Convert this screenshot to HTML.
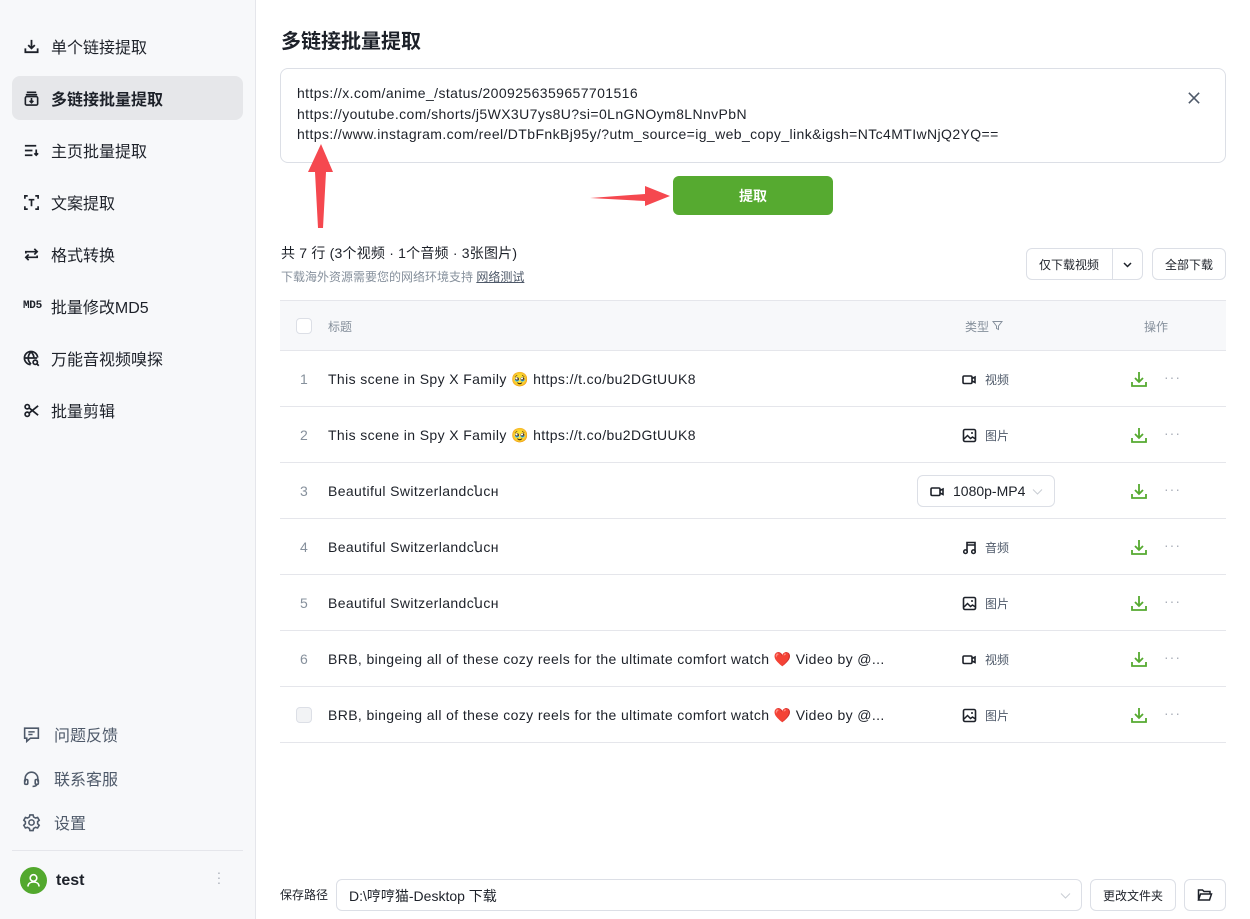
<!DOCTYPE html>
<html><head><meta charset="utf-8"><style>
*{box-sizing:border-box;margin:0;padding:0}
body{width:1250px;height:919px;position:relative;overflow:hidden;background:#fff;font-family:"Liberation Sans","Noto Sans CJK SC",sans-serif;color:#1d2129}
.abs{position:absolute}
.side{left:0;top:0;width:256px;height:919px;background:#f7f8fa;border-right:1px solid #e5e6eb}
.nav{position:absolute;left:12px;width:231px;height:44px;border-radius:8px;display:flex;align-items:center;padding-left:11px;font-size:16px;color:#1d2129}
.nav svg{width:17px;height:17px;margin-right:11px;flex:none}
.nav.act{background:#e6e7ea;font-weight:bold}
.bnav{position:absolute;left:22px;display:flex;align-items:center;font-size:16px;color:#4e5969}
.bnav svg{width:19px;height:19px;margin-right:13px}
.row{position:absolute;left:280px;width:946px;height:56px;border-bottom:1px solid #e5e6eb;font-size:14px}
.row .i{position:absolute;left:20px;top:20px;color:#86909c}
.row .t{position:absolute;left:48px;top:20px;color:#1d2129;letter-spacing:0.38px}
.row .ty{position:absolute;left:682px;top:20px;display:flex;align-items:center;font-size:12px;color:#4e5969}
.row .ty svg{width:15px;height:15px;margin-right:8px}
.row .dl{position:absolute;left:850px;top:19px}
.row .dots{position:absolute;left:884px;top:19px;color:#a9aeb8;font-size:14px;letter-spacing:1px;line-height:14px}
.btn{position:absolute;border:1px solid #dcdfe6;border-radius:6px;background:#fff;font-size:12px;display:flex;align-items:center;justify-content:center;color:#1d2129}
</style></head><body>
<div class="abs side"></div>

<div class="nav" style="top:24px"><svg viewBox="0 0 18 18" fill="none" stroke="#1d2129" stroke-width="1.9"><path d="M9 2v9M5.5 7.5L9 11l3.5-3.5M2.5 11v4h13v-4"/></svg>单个链接提取</div>
<div class="nav act" style="top:76px"><svg viewBox="0 0 18 18" fill="none" stroke="#1d2129" stroke-width="1.7"><path d="M4 2.5h10M3 5h12"/><rect x="2.5" y="7" width="13" height="9" rx="1.5"/><path d="M9 8.5v5M7 11.5l2 2 2-2"/></svg>多链接批量提取</div>
<div class="nav" style="top:128px"><svg viewBox="0 0 18 18" fill="none" stroke="#1d2129" stroke-width="1.8"><path d="M2 4h12M2 9h8M2 14h8M14 8v6M12 12l2 2 2-2"/></svg>主页批量提取</div>
<div class="nav" style="top:180px"><svg viewBox="0 0 18 18" fill="none" stroke="#1d2129" stroke-width="1.8"><path d="M2 5V2h3M13 2h3v3M16 13v3h-3M5 16H2v-3M6 6h6M9 6v7"/></svg>文案提取</div>
<div class="nav" style="top:232px"><svg viewBox="0 0 18 18" fill="none" stroke="#1d2129" stroke-width="1.8"><path d="M3 8V6h12M12 3l3 3-3 3M15 10v2H3M6 15l-3-3 3-3"/></svg>格式转换</div>
<div class="nav" style="top:284px"><span style="font-size:11px;font-weight:bold;margin-right:9px;letter-spacing:-0.3px;font-family:'Liberation Mono',monospace">MD5</span>批量修改MD5</div>
<div class="nav" style="top:336px"><svg viewBox="0 0 18 18" fill="none" stroke="#1d2129" stroke-width="1.8"><path d="M15.5 8A7 7 0 1 0 8 15.5M2 8.5h13M8.5 2c-2 2-3 4-3 6.5s1 4.5 3 6.5M8.5 2c2 2 3 4 3 6"/><circle cx="13" cy="13" r="2.3"/><path d="M14.7 14.7l2 2"/></svg>万能音视频嗅探</div>
<div class="nav" style="top:388px"><svg viewBox="0 0 18 18" fill="none" stroke="#1d2129" stroke-width="1.8"><circle cx="4.5" cy="5" r="2.3"/><circle cx="4.5" cy="13" r="2.3"/><path d="M6.5 6.3L16 14M6.5 11.7L16 4"/></svg>批量剪辑</div>

<div class="bnav" style="top:722px"><svg viewBox="0 0 18 18" fill="none" stroke="#4e5969" stroke-width="1.5"><path d="M2.5 3h13v9.5H8l-3.5 3v-3h-2z"/><path d="M6 6.5h6M6 9h4"/></svg>问题反馈</div>
<div class="bnav" style="top:766px"><svg viewBox="0 0 18 18" fill="none" stroke="#4e5969" stroke-width="1.5"><path d="M3 12V9a6 6 0 0 1 12 0v3"/><rect x="2.5" y="10" width="3" height="4.5" rx="1"/><rect x="12.5" y="10" width="3" height="4.5" rx="1"/><path d="M14 14.5c0 1.5-2 2-4 2"/></svg>联系客服</div>
<div class="bnav" style="top:810px"><svg viewBox="0 0 18 18" fill="none" stroke="#4e5969" stroke-width="1.5"><path d="M7.5 1.8h3l.5 2 1.8 1 2-.6 1.5 2.6-1.5 1.4v2l1.5 1.4-1.5 2.6-2-.6-1.8 1-.5 2h-3l-.5-2-1.8-1-2 .6-1.5-2.6 1.5-1.4v-2L1.7 6.8l1.5-2.6 2 .6 1.8-1z"/><circle cx="9" cy="9" r="2.5"/></svg>设置</div>
<div class="abs" style="left:12px;top:850px;width:231px;height:1px;background:#e5e6eb"></div>
<div class="abs" style="left:20px;top:867px;width:27px;height:27px;border-radius:50%;background:#52a82d"><svg viewBox="0 0 27 27" width="27" height="27" fill="none" stroke="#fff" stroke-width="1.6"><circle cx="13.5" cy="11" r="3.3"/><path d="M8 19.5c0-3 2.5-4.5 5.5-4.5s5.5 1.5 5.5 4.5"/></svg></div>
<div class="abs" style="left:56px;top:872px;font-size:16px;font-weight:bold">test</div>
<div class="abs" style="left:216px;top:870px;color:#a9aeb8;font-size:14px;line-height:5px;width:6px;text-align:center">·<br>·<br>·</div>

<div class="abs" style="left:281px;top:25px;font-size:20px;font-weight:bold">多链接批量提取</div>
<div class="abs" style="left:280px;top:68px;width:946px;height:95px;border:1px solid #dcdfe6;border-radius:8px"></div>
<div class="abs" style="left:297px;top:83px;font-size:14px;line-height:20.5px;color:#1d2129;letter-spacing:0.4px">https://x.com/anime_/status/2009256359657701516<br>https://youtube.com/shorts/j5WX3U7ys8U?si=0LnGNOym8LNnvPbN<br>https://www.instagram.com/reel/DTbFnkBj95y/?utm_source=ig_web_copy_link&amp;igsh=NTc4MTIwNjQ2YQ==</div>
<svg class="abs" style="left:1188px;top:92px" width="12" height="12" viewBox="0 0 14 14" stroke="#4e5969" stroke-width="1.8"><path d="M1 1l12 12M13 1L1 13"/></svg>
<div class="abs" style="left:673px;top:176px;width:160px;height:39px;border-radius:6px;background:#56aa30;color:#fff;font-weight:bold;font-size:14px;display:flex;align-items:center;justify-content:center">提取</div>
<svg class="abs" style="left:0;top:0" width="1250" height="919"><path d="M318 228L315 172L308 172L321 144L333 172L326 172L323 228Z" fill="#f5484f"/><path d="M590 198L645 194L645 186L670 196L645 206L645 201Z" fill="#f5484f"/></svg>

<div class="abs" style="left:281px;top:243px;font-size:14px;color:#1d2129;letter-spacing:0.2px">共 7 行 (3个视频 · 1个音频 · 3张图片)</div>
<div class="abs" style="left:281px;top:268px;font-size:12px;color:#86909c">下载海外资源需要您的网络环境支持 <span style="text-decoration:underline;color:#4e5969">网络测试</span></div>
<div class="btn" style="left:1026px;top:248px;width:117px;height:32px;justify-content:flex-start;padding-left:12px">仅下载视频<span style="position:absolute;left:85px;top:0;width:1px;height:30px;background:#dcdfe6"></span><svg style="position:absolute;left:95px;top:10px" width="11" height="11" viewBox="0 0 11 11" fill="none" stroke="#1d2129" stroke-width="1.5"><path d="M2 4l3.5 3.5L9 4"/></svg></div>
<div class="btn" style="left:1152px;top:248px;width:74px;height:32px">全部下载</div>

<div class="abs" style="left:280px;top:300px;width:946px;height:51px;background:#f7f8fa;border-top:1px solid #e5e6eb;border-bottom:1px solid #e5e6eb"></div>
<div class="abs" style="left:296px;top:318px;width:16px;height:16px;border:1px solid #dcdfe6;border-radius:4px;background:#fff"></div>
<div class="abs" style="left:328px;top:318px;font-size:12px;color:#86909c">标题</div>
<div class="abs" style="left:965px;top:318px;font-size:12px;color:#86909c">类型 <svg width="11" height="11" viewBox="0 0 11 11" fill="none" stroke="#86909c" stroke-width="1"><path d="M1 1.5h9L6.5 6v3.5L4.5 8.5V6z"/></svg></div>
<div class="abs" style="left:1144px;top:318px;font-size:12px;color:#86909c">操作</div>

<svg width="0" height="0" style="position:absolute"><defs>
<symbol id="vid" viewBox="0 0 15 15"><rect x="1" y="4" width="9" height="7.5" rx="1.2" fill="none" stroke="#1d2129" stroke-width="1.6"/><path d="M10 6.5l3-1.5v5.5l-3-1.5" fill="none" stroke="#1d2129" stroke-width="1.6"/></symbol>
<symbol id="img" viewBox="0 0 15 15"><rect x="1.5" y="1.5" width="12" height="12" rx="1.5" fill="none" stroke="#1d2129" stroke-width="1.6"/><path d="M2 11l3.5-3.5 3 3 2-1.5 3 2" fill="none" stroke="#1d2129" stroke-width="1.5"/><circle cx="10" cy="5" r="1" fill="#1d2129"/></symbol>
<symbol id="aud" viewBox="0 0 15 15"><path d="M5 11.5V2.5h8v9M5 5h8" fill="none" stroke="#1d2129" stroke-width="1.6"/><circle cx="3.5" cy="11.7" r="1.8" fill="none" stroke="#1d2129" stroke-width="1.5"/><circle cx="11.5" cy="11.7" r="1.8" fill="none" stroke="#1d2129" stroke-width="1.5"/></symbol>
<symbol id="dl" viewBox="0 0 18 18"><path d="M9 2v10M5 8l4 4 4-4M2 12v4h14v-4" fill="none" stroke="#56aa30" stroke-width="1.8"/></symbol>
</defs></svg>

<div class="row" style="top:351px"><span class="i">1</span><span class="t">This scene in Spy X Family 🥹 https://t.co/bu2DGtUUK8</span><span class="ty"><svg><use href="#vid"/></svg>视频</span><svg class="dl" width="18" height="18"><use href="#dl"/></svg><span class="dots">···</span></div>
<div class="row" style="top:407px"><span class="i">2</span><span class="t">This scene in Spy X Family 🥹 https://t.co/bu2DGtUUK8</span><span class="ty"><svg><use href="#img"/></svg>图片</span><svg class="dl" width="18" height="18"><use href="#dl"/></svg><span class="dots">···</span></div>
<div class="row" style="top:463px"><span class="i">3</span><span class="t">Beautiful Switzerlandсնсн</span><div style="position:absolute;left:637px;top:12px;width:138px;height:32px;border:1px solid #dcdfe6;border-radius:6px;display:flex;align-items:center;padding-left:12px;font-size:14px"><svg width="15" height="15" style="margin-right:8px"><use href="#vid"/></svg>1080p-MP4<svg width="11" height="11" viewBox="0 0 11 11" style="margin-left:7px" fill="none" stroke="#c9cdd4" stroke-width="1"><path d="M1 3.5l4.5 4.5L10 3.5"/></svg></div><svg class="dl" width="18" height="18"><use href="#dl"/></svg><span class="dots">···</span></div>
<div class="row" style="top:519px"><span class="i">4</span><span class="t">Beautiful Switzerlandсնсн</span><span class="ty"><svg><use href="#aud"/></svg>音频</span><svg class="dl" width="18" height="18"><use href="#dl"/></svg><span class="dots">···</span></div>
<div class="row" style="top:575px"><span class="i">5</span><span class="t">Beautiful Switzerlandсնсн</span><span class="ty"><svg><use href="#img"/></svg>图片</span><svg class="dl" width="18" height="18"><use href="#dl"/></svg><span class="dots">···</span></div>
<div class="row" style="top:631px"><span class="i">6</span><span class="t">BRB, bingeing all of these cozy reels for the ultimate comfort watch ❤️ Video by @...</span><span class="ty"><svg><use href="#vid"/></svg>视频</span><svg class="dl" width="18" height="18"><use href="#dl"/></svg><span class="dots">···</span></div>
<div class="row" style="top:687px"><span style="position:absolute;left:16px;top:20px;width:16px;height:16px;border:1px solid #dcdfe6;border-radius:4px;background:#f2f3f5"></span><span class="t">BRB, bingeing all of these cozy reels for the ultimate comfort watch ❤️ Video by @...</span><span class="ty"><svg><use href="#img"/></svg>图片</span><svg class="dl" width="18" height="18"><use href="#dl"/></svg><span class="dots">···</span></div>

<div class="abs" style="left:280px;top:886px;font-size:12px;color:#1d2129">保存路径</div>
<div class="abs" style="left:336px;top:879px;width:746px;height:32px;border:1px solid #dcdfe6;border-radius:6px;font-size:14px;padding:6px 12px">D:\哼哼猫-Desktop 下载<svg style="position:absolute;right:10px;top:10px" width="11" height="11" viewBox="0 0 11 11" fill="none" stroke="#c9cdd4" stroke-width="1"><path d="M1 3.5l4.5 4.5L10 3.5"/></svg></div>
<div class="btn" style="left:1090px;top:879px;width:86px;height:32px">更改文件夹</div>
<div class="btn" style="left:1184px;top:879px;width:42px;height:32px"><svg width="16" height="14" viewBox="0 0 16 14" fill="none" stroke="#1d2129" stroke-width="1.5"><path d="M1.5 12V2h4l1.5 1.5h6V6M1.5 12l2-6h11l-2 6z"/></svg></div>
</body></html>
